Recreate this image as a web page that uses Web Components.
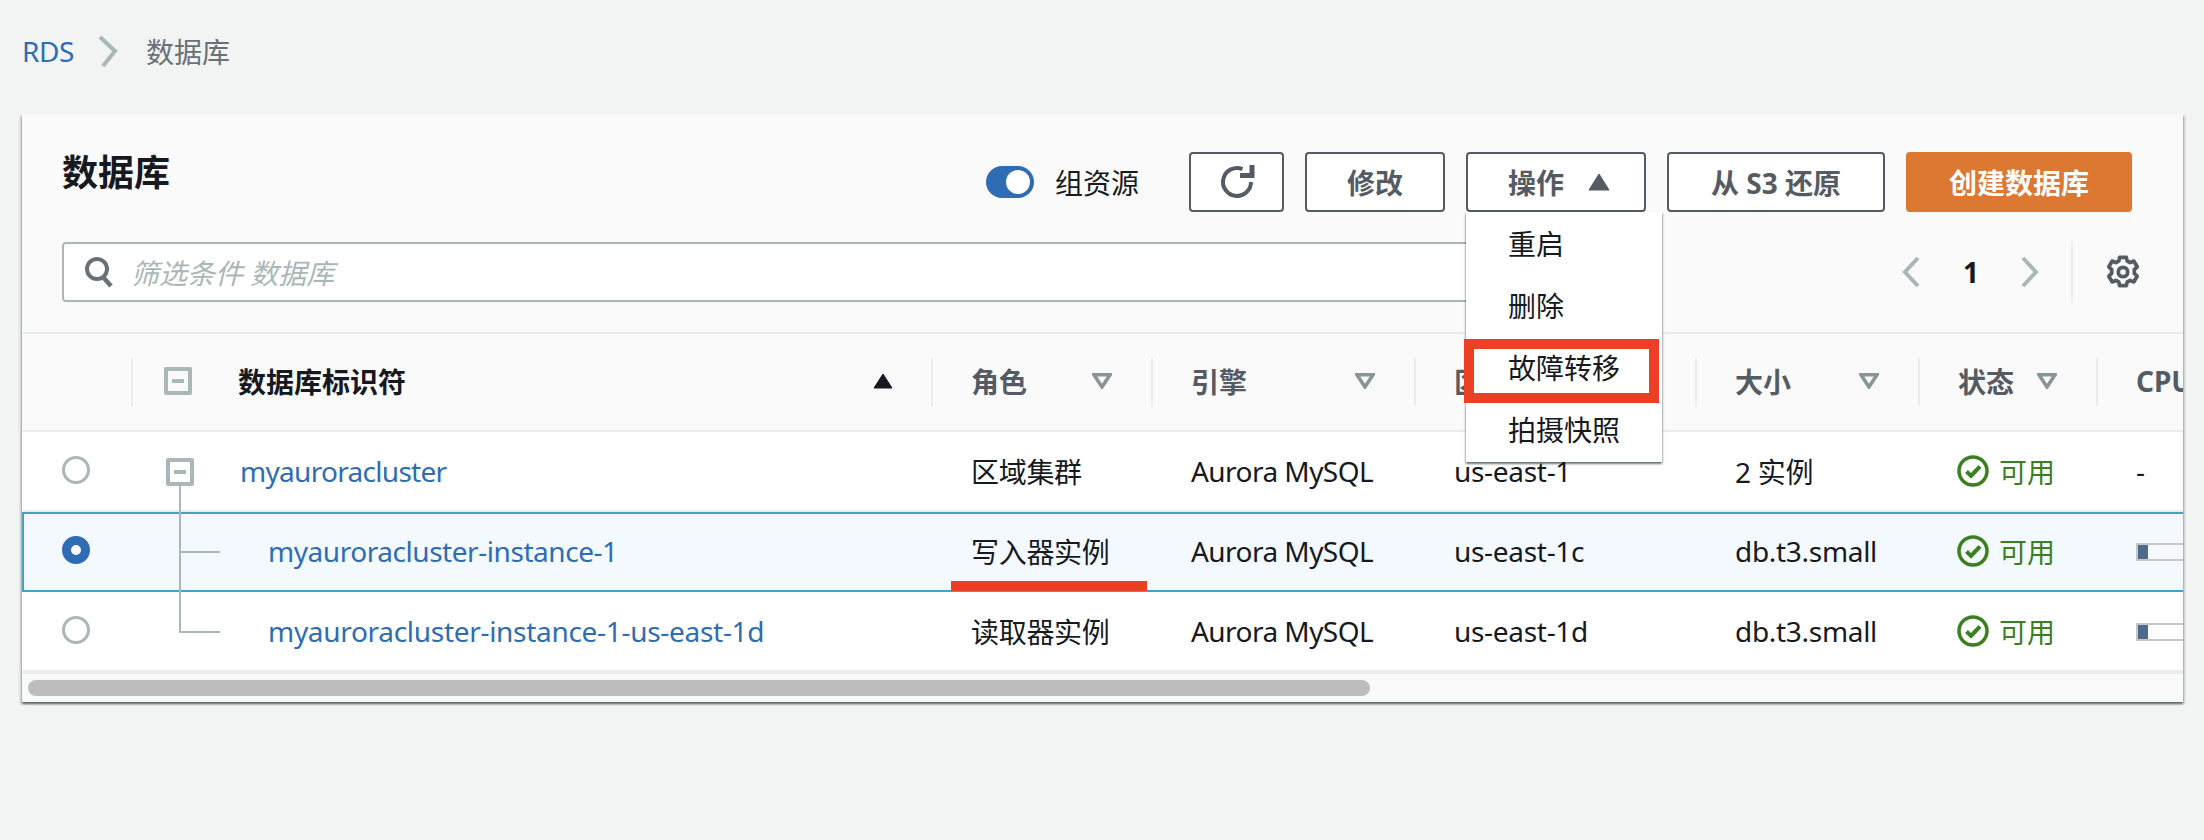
<!DOCTYPE html>
<html lang="zh">
<head>
<meta charset="utf-8">
<title>数据库</title>
<style>
    html, body { margin: 0; height: 100%; }
    body {
        background: #f2f3f3;
        color: #16191f;
        font: 28px "Noto Sans", "Noto Sans CJK SC", sans-serif;
    }
</style>
</head>
<body>
<rds-breadcrumb></rds-breadcrumb>
<db-panel></db-panel>

<script>
const COLUMNS = "109px 800px 220px 263px 281px 223px 178px minmax(0, 1fr)";

class RdsBreadcrumb extends HTMLElement {
    constructor() {
        super();
        this.attachShadow({ mode: "open" });
        this.shadowRoot.innerHTML = `
            <style>
                :host { display: flex; align-items: center; height: 114px; padding: 0 0 12px 22px; box-sizing: border-box; }
                a { color: #2e6db4; letter-spacing: -0.4px; }
                svg { margin: 0 28px 0 24px; }
                span { color: #687078; }
            </style>
            <a>RDS</a>
            <svg width="20" height="32" viewBox="0 0 20 32"><path d="M2 2 L17 16 L5 31" fill="none" stroke="#aab7b8" stroke-width="4"/></svg>
            <span>数据库</span>
        `;
    }
}

class AwsButton extends HTMLElement {
    constructor() {
        super();
        this.attachShadow({ mode: "open" });
        this.shadowRoot.innerHTML = `
            <style>
                :host { display: flex; align-items: center; justify-content: center; box-sizing: border-box; height: 60px; border: 2px solid #545b64; border-radius: 4px; background: #fff; color: #545b64; font-weight: 700; white-space: nowrap; }
                :host([primary]) { background: #dd7833; border-color: #dd7833; color: #fff; }
            </style>
            <slot></slot>
        `;
    }
}

class AwsToggle extends HTMLElement {
    constructor() {
        super();
        this.attachShadow({ mode: "open" });
        this.shadowRoot.innerHTML = `
            <style>
                :host { display: flex; align-items: center; gap: 21px; color: #16191f; }
                i { display: block; box-sizing: border-box; width: 48px; height: 32px; border-radius: 16px; background: #2e6db4; position: relative; }
                i::after { content: ""; position: absolute; right: 4px; top: 4px; width: 24px; height: 24px; border-radius: 50%; background: #fff; }
            </style>
            <i></i><slot></slot>
        `;
    }
}

class ActionMenu extends HTMLElement {
    constructor() {
        super();
        this.attachShadow({ mode: "open" });
        this.shadowRoot.innerHTML = `
            <style>
                :host { position: absolute; left: -2px; top: 58px; z-index: 5; display: block; box-sizing: border-box; width: 196px; height: 250px; background: #fff; padding-top: 1px; box-shadow: 0 2px 2px rgba(0,28,36,.5), 1px 1px 2px rgba(0,28,36,.15), -1px 1px 2px rgba(0,28,36,.15); color: #16191f; font-weight: 400; }
                div { position: relative; height: 62px; line-height: 62px; padding-left: 42px; }
                div.marked::after { content: ""; position: absolute; left: -2px; top: 2px; width: 195px; height: 64px; box-sizing: border-box; border: 10px solid #ec3f25; }
            </style>
            <div>重启</div>
            <div>删除</div>
            <div class="marked">故障转移</div>
            <div>拍摄快照</div>
        `;
    }
}

class DbToolbar extends HTMLElement {
    constructor() {
        super();
        this.attachShadow({ mode: "open" });
        this.shadowRoot.innerHTML = `
            <style>
                :host { display: block; box-sizing: border-box; height: 220px; padding: 38px 51px 0 40px; background: #fafafa; border-bottom: 2px solid #eaeded; }
                .top { display: flex; align-items: flex-start; height: 60px; }
                h1 { margin: 0; font-size: 36px; line-height: 42px; font-weight: 700; color: #16191f; }
                aws-toggle { margin-left: auto; height: 60px; margin-right: 50px; font-weight: 400; }
                .actions { display: flex; gap: 21px; }
                .refresh { width: 95px; }
                .modify { width: 140px; }
                .ops { width: 180px; position: relative; gap: 24px; padding-left: 6px; }
                .ops svg { display: block; }
                .s3 { width: 218px; }
                .create { width: 226px; }
                .filter { display: flex; align-items: center; height: 60px; margin-top: 30px; }
                .search { display: flex; align-items: center; gap: 18px; box-sizing: border-box; width: 1580px; height: 60px; padding-left: 21px; background: #fff; border: 2px solid #aab7b8; border-radius: 4px; color: #aab7b8; font-style: italic; }
                .pager { display: flex; align-items: center; margin-left: auto; height: 60px; margin-right: -8px; }
                .pager b { width: 18px; margin: 0 41px 0 42px; text-align: center; color: #16191f; }
                .sep { width: 2px; height: 60px; background: #eaeded; margin: 0 33px 0 32px; }
            </style>
            <div class="top">
                <h1>数据库</h1>
                <aws-toggle>组资源</aws-toggle>
                <div class="actions">
                    <aws-button class="refresh">
                        <svg width="36" height="36" viewBox="0 0 36 36"><path d="M23.500 5.100A14 14 0 1 0 32 18" fill="none" stroke="#545b64" stroke-width="4"/><path d="M21 11.500H33V1" fill="none" stroke="#545b64" stroke-width="5"/></svg>
                    </aws-button>
                    <aws-button class="modify">修改</aws-button>
                    <aws-button class="ops">操作
                        <svg width="22" height="18" viewBox="0 0 22 18"><path d="M11 1 L21 17 H1 Z" fill="#545b64" stroke="#545b64" stroke-linejoin="round"/></svg>
                        <action-menu></action-menu>
                    </aws-button>
                    <aws-button class="s3">从 S3 还原</aws-button>
                    <aws-button class="create" primary>创建数据库</aws-button>
                </div>
            </div>
            <div class="filter">
                <div class="search">
                    <svg width="28" height="32" viewBox="0 0 28 32"><circle cx="12" cy="13" r="10" fill="none" stroke="#687078" stroke-width="4"/><path d="M18 21 L26 30" stroke="#687078" stroke-width="4.500"/></svg>
                    筛选条件 数据库
                </div>
                <div class="pager">
                    <svg width="18" height="32" viewBox="0 0 18 32"><path d="M16 2 L3 16 L16 30" fill="none" stroke="#aab7b8" stroke-width="4"/></svg>
                    <b>1</b>
                    <svg width="18" height="32" viewBox="0 0 18 32"><path d="M2 2 L15 16 L2 30" fill="none" stroke="#aab7b8" stroke-width="4"/></svg>
                    <i class="sep"></i>
                    <svg width="34" height="36" viewBox="-18 -18 36 36"><circle r="5" fill="none" stroke="#545b64" stroke-width="4"/><path d="M-3.500-15.500h7l1 4 3 1.500 4-1.500 3.500 6-3 3v4l3 3-3.500 6-4-1.500-3 1.500-1 4h-7l-1-4-3-1.500-4 1.500-3.500-6 3-3v-4l-3-3 3.500-6 4 1.500 3-1.500z" fill="none" stroke="#545b64" stroke-width="4" stroke-linejoin="round"/></svg>
                </div>
            </div>
        `;
    }
}

class DbHead extends HTMLElement {
    constructor() {
        super();
        this.attachShadow({ mode: "open" });
        const filterIcon = `<svg class="filter" width="20" height="16" viewBox="0 0 20 16"><path d="M2 1.800 H18 L10 14 Z" fill="none" stroke="#879596" stroke-width="3.500"/></svg>`;
        const cols = ["角色", "引擎", "区域和可用区", "大小", "状态"];
        this.shadowRoot.innerHTML = `
            <style>
                :host { display: grid; grid-template-columns: ${COLUMNS}; height: 98px; box-sizing: border-box; background: #fafafa; border-bottom: 2px solid #eaeded; align-items: center; font-weight: 700; color: #545b64; white-space: nowrap; }
                .c { display: flex; align-items: center; height: 48px; box-sizing: border-box; border-left: 2px solid #eaeded; padding: 0 0 3px 38px; overflow: hidden; }
                .c:first-of-type { border: 0; }
                .name { color: #16191f; padding-left: 31px; gap: 46px; }
                .name span { flex: 1; }
                .box { flex: none; box-sizing: border-box; width: 28px; height: 28px; border: 4px solid #aab7b8; border-radius: 2px; display: flex; align-items: center; justify-content: center; }
                .box::after { content: ""; width: 12px; height: 4px; background: #aab7b8; }
                .sort { margin-right: 38px; margin-left: -46px; }
                .label { flex: 1; }
                .filter { margin-right: 39px; flex: none; }
            </style>
            <div class="c"></div>
            <div class="c name">
                <i class="box"></i><span>数据库标识符</span>
                <svg class="sort" width="20" height="16" viewBox="0 0 20 16"><path d="M10 1 L19 15 H1 Z" fill="#16191f" stroke="#16191f" stroke-linejoin="round"/></svg>
            </div>
            ${cols.map((col) => `<div class="c"><span class="label">${col}</span>${filterIcon}</div>`).join("")}
            <div class="c">CPU</div>
        `;
    }
}

class DbRow extends HTMLElement {
    connectedCallback() {
        if (this.shadowRoot) return;
        this.attachShadow({ mode: "open" });
        const d = this.dataset;
        const cpu = d.cpu === "-" ? "-" : `<i class="bar"></i>`;
        this.shadowRoot.innerHTML = `
            <style>
                :host { display: grid; grid-template-columns: ${COLUMNS}; height: 80px; box-sizing: border-box; background: #fff; border-top: 2px solid transparent; border-bottom: 2px solid #eaeded; padding-bottom: 3px; align-items: center; white-space: nowrap; color: #16191f; position: relative; letter-spacing: -0.3px; }
                :host([selected]) { background: #f3f9fe; border-top-color: #44a0c6; border-bottom-color: #44a0c6; box-shadow: inset 2px 0 0 #44a0c6; }
                .radio { justify-self: start; margin-left: 40px; margin-top: -1px; width: 28px; height: 28px; box-sizing: border-box; border-radius: 50%; border: 3px solid #aab7b8; background: #fff; }
                :host([selected]) .radio { border: 9px solid #2e6db4; }
                a { color: #2e6db4; padding-left: var(--indent, 0); letter-spacing: var(--link-spacing, -0.3px); }
                .c { padding-left: 40px; overflow: hidden; }
                .engine { letter-spacing: -0.55px; }
                .ok { display: flex; align-items: center; gap: 10px; color: #3b7f1f; padding-left: 39px; letter-spacing: 0; }
                .bar { display: block; width: 100px; height: 18px; box-sizing: border-box; border: 2px solid #c5c7c9; border-right: 0; position: relative; margin-top: 2px; }
                .bar::after { content: ""; position: absolute; left: 0; top: 0; width: 10px; height: 14px; background: #4f6b8c; }
                .mark { position: absolute; left: 929px; bottom: -1px; width: 196px; height: 10px; background: #ec3f25; }
            </style>
            <i class="radio"></i>
            <div><a>${d.name}</a></div>
            <div class="c">${d.role}</div>
            <div class="c engine">Aurora MySQL</div>
            <div class="c">${d.region}</div>
            <div class="c">${d.size}</div>
            <div class="c ok">
                <svg width="32" height="32" viewBox="0 0 32 32"><circle cx="16" cy="16" r="14" fill="none" stroke="#3b7f1f" stroke-width="3.500"/><path d="M9.500 16.500 L14 21 L23 11.500" fill="none" stroke="#3b7f1f" stroke-width="4"/></svg>
                可用
            </div>
            <div class="c">${cpu}</div>
            ${d.marked ? `<i class="mark"></i>` : ""}
        `;
    }
}

class DbPanel extends HTMLElement {
    constructor() {
        super();
        this.attachShadow({ mode: "open" });
        this.shadowRoot.innerHTML = `
            <style>
                :host { display: block; box-sizing: border-box; margin: 0 21px 0 22px; background: #fafafa; box-shadow: 0 2px 2px rgba(0,28,36,.5), 2px 2px 2px rgba(0,28,36,.15), -2px 2px 2px rgba(0,28,36,.15); position: relative; }
                .line { position: absolute; background: #aab7b8; z-index: 2; }
                .box { position: absolute; left: 144px; width: 28px; height: 28px; box-sizing: border-box; border: 4px solid #aab7b8; border-radius: 2px; display: flex; align-items: center; justify-content: center; background: #fff; z-index: 2; }
                .box::after { content: ""; width: 12px; height: 4px; background: #aab7b8; }
                .bar { height: 32px; background: #fafafa; border-top: 4px solid #eaeded; box-sizing: border-box; padding-top: 6px; margin-top: -2px; position: relative; }
                .bar i { display: block; width: 1342px; height: 16px; margin-left: 6px; border-radius: 8px; background: #bdbdbd; }
                db-row.top { --indent: 109px; --link-spacing: -0.7px; }
                db-row.child { --indent: 137px; }
                db-row.writer { --link-spacing: -0.45px; }
            </style>
            <db-toolbar></db-toolbar>
            <db-head></db-head>
            <db-row class="top" data-name="myauroracluster" data-role="区域集群" data-region="us-east-1" data-size="2 实例" data-cpu="-"></db-row>
            <db-row class="child writer" selected data-name="myauroracluster-instance-1" data-role="写入器实例" data-region="us-east-1c" data-size="db.t3.small" data-marked="1"></db-row>
            <db-row class="child" data-name="myauroracluster-instance-1-us-east-1d" data-role="读取器实例" data-region="us-east-1d" data-size="db.t3.small"></db-row>
            <div class="bar"><i></i></div>
            <i class="box" style="top:344px"></i>
            <i class="line" style="left:157px;top:372px;width:2px;height:147px"></i>
            <i class="line" style="left:157px;top:437px;width:41px;height:2px"></i>
            <i class="line" style="left:157px;top:517px;width:41px;height:2px"></i>
        `;
    }
}

customElements.define("rds-breadcrumb", RdsBreadcrumb);
customElements.define("aws-button", AwsButton);
customElements.define("aws-toggle", AwsToggle);
customElements.define("action-menu", ActionMenu);
customElements.define("db-toolbar", DbToolbar);
customElements.define("db-head", DbHead);
customElements.define("db-row", DbRow);
customElements.define("db-panel", DbPanel);
</script>
</body>
</html>
